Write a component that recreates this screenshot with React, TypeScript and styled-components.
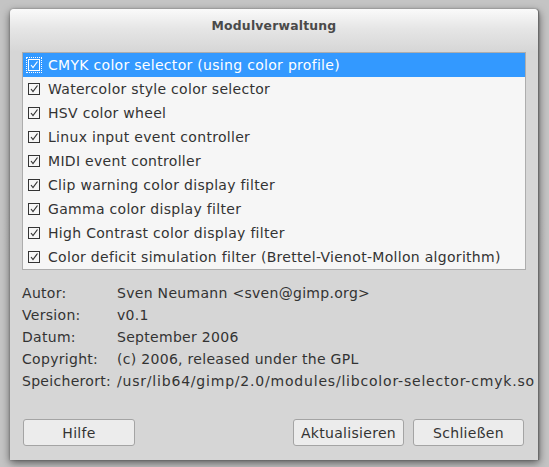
import React from 'react';
import styled, { createGlobalStyle } from 'styled-components';

const GlobalStyle = createGlobalStyle`
  html, body {
    margin: 0;
    padding: 0;
    background: #c2c2c2;
    font-family: "DejaVu Sans", "Liberation Sans", sans-serif;
    font-size: 14px;
    letter-spacing: 0.3px;
    color: #333333;
  }
`;

const Screen = styled.div`
  width: 549px;
  height: 467px;
  padding: 9px 10px 0 10px;
  box-sizing: border-box;
  background: radial-gradient(ellipse at center, #b8b8b8 0%, #c4c4c4 70%);
`;

const Window = styled.div`
  width: 529px;
  height: 451px;
  box-sizing: border-box;
  display: flex;
  flex-direction: column;
  background: #d6d6d6;
  border-radius: 4px 4px 0 0;
  border-right: 1px solid #6a6a6a;
  box-shadow: 0 3px 9px rgba(0, 0, 0, 0.55), 0 0 2px rgba(0, 0, 0, 0.35);
`;

const TitleBar = styled.div`
  height: 43px;
  flex: none;
  display: flex;
  justify-content: center;
  padding-top: 9px;
  box-sizing: border-box;
  border-radius: 4px 4px 0 0;
  background: linear-gradient(#fafafa 0%, #e6e6e6 45%, #d6d6d6 100%);
  font-size: 12.4px;
  letter-spacing: 0.2px;
  font-weight: bold;
  color: #4a4a4a;
`;

const Content = styled.div`
  flex: 1;
  display: flex;
  flex-direction: column;
  padding: 0 12px 14px 12px;
`;

const ModuleList = styled.ul`
  list-style: none;
  margin: 0;
  padding: 0;
  border: 1px solid #adadad;
  background: #f6f6f6;
`;

const Row = styled.li<{ $selected?: boolean }>`
  height: 24px;
  display: flex;
  align-items: center;
  gap: 6px;
  padding-left: 3px;
  white-space: nowrap;
  background: ${({ $selected }) => ($selected ? '#3399ff' : 'transparent')};
  color: ${({ $selected }) => ($selected ? '#ffffff' : '#333333')};
`;

const Focus = styled.span<{ $focused?: boolean }>`
  width: 16px;
  height: 16px;
  flex: none;
  display: flex;
  align-items: center;
  justify-content: center;
  box-sizing: border-box;
  outline: ${({ $focused }) => ($focused ? '1px dotted #ffffff' : 'none')};
  outline-offset: -1px;
`;

const Box = styled.span<{ $light?: boolean }>`
  width: 12px;
  height: 12px;
  box-sizing: border-box;
  border: 1px solid ${({ $light }) => ($light ? '#ffffff' : '#333333')};
  display: flex;
  align-items: center;
  justify-content: center;
`;

const Info = styled.div`
  display: grid;
  grid-template-columns: 95px 1fr;
  grid-auto-rows: 22px;
  align-items: center;
  margin-top: 12px;
  color: #333333;
  white-space: nowrap;
`;

const Value = styled.span<{ $spacing?: number }>`
  letter-spacing: ${({ $spacing }) => ($spacing ?? 0.3)}px;
`;

const Buttons = styled.div`
  margin-top: auto;
  display: flex;
  gap: 9px;
  padding: 0 2px 0 1px;
`;

const Button = styled.button<{ $w: number; $push?: boolean }>`
  width: ${({ $w }) => $w}px;
  height: 27px;
  margin-left: ${({ $push }) => ($push ? 'auto' : '0')};
  font-family: inherit;
  font-size: 14px;
  letter-spacing: 0.3px;
  color: #333333;
  background: #ececec;
  border: 1px solid #a4a4a4;
  border-radius: 3px;
  padding: 0;
`;

const Check = ({ light }: { light?: boolean }) => (
  <svg width="10" height="10" viewBox="0 0 10 10">
    <path
      d="M2 5 L4 7.5 L8.5 1.5"
      fill="none"
      stroke={light ? '#ffffff' : '#333333'}
      strokeWidth="1.2"
    />
  </svg>
);

const modules = [
  'CMYK color selector (using color profile)',
  'Watercolor style color selector',
  'HSV color wheel',
  'Linux input event controller',
  'MIDI event controller',
  'Clip warning color display filter',
  'Gamma color display filter',
  'High Contrast color display filter',
  'Color deficit simulation filter (Brettel-Vienot-Mollon algorithm)',
];

const details: [string, string, number?][] = [
  ['Autor:', 'Sven Neumann <sven@gimp.org>'],
  ['Version:', 'v0.1'],
  ['Datum:', 'September 2006'],
  ['Copyright:', '(c) 2006, released under the GPL'],
  ['Speicherort:', '/usr/lib64/gimp/2.0/modules/libcolor-selector-cmyk.so', 0.8],
];

export default function App() {
  return (
    <>
      <GlobalStyle />
      <Screen>
        <Window>
          <TitleBar>Modulverwaltung</TitleBar>
          <Content>
            <ModuleList>
              {modules.map((m, i) => (
                <Row key={m} $selected={i === 0}>
                  <Focus $focused={i === 0}>
                    <Box $light={i === 0}>
                      <Check light={i === 0} />
                    </Box>
                  </Focus>
                  {m}
                </Row>
              ))}
            </ModuleList>
            <Info>
              {details.map(([k, v, s]) => (
                <React.Fragment key={k}>
                  <span>{k}</span>
                  <Value $spacing={s}>{v}</Value>
                </React.Fragment>
              ))}
            </Info>
            <Buttons>
              <Button $w={112}>Hilfe</Button>
              <Button $w={111} $push>Aktualisieren</Button>
              <Button $w={111}>Schließen</Button>
            </Buttons>
          </Content>
        </Window>
      </Screen>
    </>
  );
}
